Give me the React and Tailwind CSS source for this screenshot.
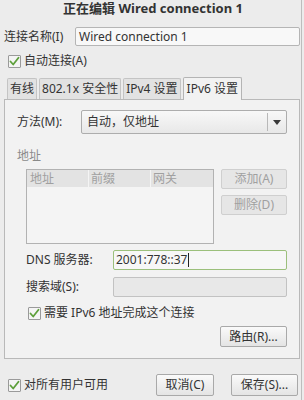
import React from "react";

const font = { fontFamily: '"Noto Sans", "Noto Sans CJK SC", sans-serif' };

function Check() {
  return (
    <span className="inline-flex items-center justify-center w-[13px] h-[13px] border border-[#9a9a9a] bg-[#f4f4f4] rounded-[1px] shrink-0">
      <svg width="11" height="11" viewBox="0 0 11 11">
        <path d="M1.5 5.5 L4.2 8.5 L9.5 1.8" stroke="#5d9f3a" strokeWidth="1.8" fill="none" strokeLinecap="round" strokeLinejoin="round" />
      </svg>
    </span>
  );
}

function Btn({ children, disabled, className = "" }) {
  return (
    <div
      className={
        "flex items-center justify-center border rounded-[2px] text-[12px] " +
        (disabled
          ? "border-[#cfcfcf] bg-[#e6e6e6] text-[#a0a0a0] "
          : "border-[#a9a9a9] bg-gradient-to-b from-[#fafafa] to-[#e4e4e4] text-[#333] ") +
        className
      }
    >
      {children}
    </div>
  );
}

export default function App() {
  return (
    <div className="w-[304px] h-[400px] bg-[#ececec] text-[#333] overflow-hidden relative flex flex-col" style={font}>
      <div className="h-[18px] flex items-center justify-center text-[13px] font-bold text-[#333] pl-[2px]">
        正在编辑 Wired connection 1
      </div>
      <div className="mt-[9px] h-[19px] flex items-center pl-[4px] pr-[4px]">
        <span className="text-[12px] w-[71px]">连接名称(I)</span>
        <div className="flex-1 h-[19px] border border-[#b5b5b5] bg-[#f8f8f8] rounded-[2px] flex items-center pl-[3px] text-[12px]">
          Wired connection 1
        </div>
      </div>
      <div className="mt-[8px] h-[14px] flex items-center pl-[8px] gap-[3px] text-[12px]">
        <Check />
        <span>自动连接(A)</span>
      </div>
      <div className="mt-[8px] flex items-end pl-[7px] gap-[2px] h-[23px] text-[12px]">
        <div className="h-[21px] px-[2px] border border-b-0 border-[#c4c4c4] bg-[#e2e2e2] rounded-t-[2px] flex items-center">有线</div>
        <div className="h-[21px] px-[2px] border border-b-0 border-[#c4c4c4] bg-[#e2e2e2] rounded-t-[2px] flex items-center">802.1x 安全性</div>
        <div className="h-[21px] px-[2px] border border-b-0 border-[#c4c4c4] bg-[#e2e2e2] rounded-t-[2px] flex items-center">IPv4 设置</div>
        <div className="h-[23px] px-[3px] border border-b-0 border-[#b4b4b4] bg-[#f2f2f2] rounded-t-[2px] flex items-center relative top-[1px]">IPv6 设置</div>
      </div>
      <div className="ml-[4px] w-[296px] h-[260px] border border-[#b9b9b9] bg-[#f2f2f2] flex flex-col text-[12px]">
        <div className="mt-[10px] flex items-center h-[24px] pl-[12px] pr-[12px]">
          <span className="w-[64px]">方法(M):</span>
          <div className="flex-1 h-[24px] border border-[#adadad] rounded-[2px] bg-gradient-to-b from-[#f8f8f8] to-[#e8e8e8] flex items-center">
            <span className="flex-1 pl-[5px]">自动，仅地址</span>
            <div className="w-px h-[18px] bg-[#b8b8b8]" />
            <div className="w-[18px] flex items-center justify-center">
              <svg width="8" height="5" viewBox="0 0 8 5"><path d="M0 0 H8 L4 5 Z" fill="#3a3a3a" /></svg>
            </div>
          </div>
        </div>
        <div className="mt-[14px] pl-[12px] text-[#8a8a8a] h-[16px] flex items-center">地址</div>
        <div className="mt-[5px] flex pl-[21px] pr-[12px]">
          <div className="w-[188px] h-[75px] border border-[#b2b2b2] bg-[#f4f4f4]">
            <div className="h-[17px] bg-[#e3e3e3] flex text-[#a0a0a0]">
              <div className="w-[62px] border-r border-[#f4f4f4] pl-[3px] flex items-center">地址</div>
              <div className="w-[62px] border-r border-[#f4f4f4] pl-[2px] flex items-center">前缀</div>
              <div className="flex-1 pl-[2px] flex items-center">网关</div>
            </div>
          </div>
          <div className="ml-[7px] flex-1 flex flex-col gap-[6px]">
            <Btn disabled className="h-[20px]">添加(A)</Btn>
            <Btn disabled className="h-[20px]">删除(D)</Btn>
          </div>
        </div>
        <div className="mt-[6px] flex items-center h-[20px] pl-[21px] pr-[12px]">
          <span className="w-[87px]">DNS 服务器:</span>
          <div className="flex-1 h-[20px] border border-[#9cc07c] bg-[#f7f7f7] rounded-[2px] flex items-center pl-[2px]">
            2001:778::37<span className="w-px h-[14px] bg-[#222] ml-px" />
          </div>
        </div>
        <div className="mt-[7px] flex items-center h-[20px] pl-[21px] pr-[12px]">
          <span className="w-[87px]">搜索域(S):</span>
          <div className="flex-1 h-[20px] border border-[#c2c2c2] bg-[#e8e8e8] rounded-[2px]" />
        </div>
        <div className="mt-[9px] flex items-center h-[14px] pl-[23px] gap-[3px]">
          <Check />
          <span>需要 IPv6 地址完成这个连接</span>
        </div>
        <div className="mt-[6px] flex justify-end pr-[12px]">
          <Btn className="w-[67px] h-[21px]">路由(R)...</Btn>
        </div>
      </div>
      <div className="mt-[15px] flex items-center h-[22px] pl-[8px] pr-[6px] text-[12px]">
        <div className="flex items-center gap-[3px]">
          <Check />
          <span>对所有用户可用</span>
        </div>
        <div className="flex-1" />
        <Btn className="w-[58px] h-[22px]">取消(C)</Btn>
        <Btn className="ml-[17px] w-[67px] h-[22px]">保存(S)...</Btn>
      </div>
      <div className="absolute right-[2px] top-0 w-px h-full bg-[#bdbdbd]" />
    </div>
  );
}
